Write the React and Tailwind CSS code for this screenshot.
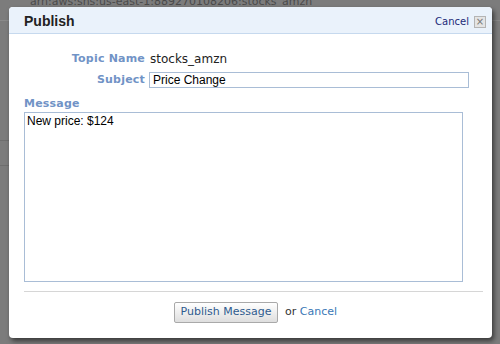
import { useState } from 'react';

function App() {
  const [subject, setSubject] = useState('Price Change');
  const [message, setMessage] = useState('New price: $124');

  return (
    <div className="relative h-[344px] w-[500px] overflow-hidden bg-[#7c7c7c] font-['DejaVu_Sans',sans-serif]">
      {/* page underneath the overlay */}
      <div className="absolute left-[30px] top-[-4px] text-[11px] leading-[12px] text-[#4a4a4a]">
        arn:aws:sns:us-east-1:889270108206:stocks_amzn
      </div>
      <div className="absolute left-0 top-[20px] h-px w-[500px] bg-[#8a8a8a]" />
      <div className="absolute left-0 top-[140px] h-px w-[9px] bg-[#6e6e6e]" />
      <div className="absolute left-0 top-[165px] h-px w-[9px] bg-[#6e6e6e]" />

      <div className="relative ml-[9px] mt-[7px] flex h-[331px] w-[483px] flex-col rounded-[4px] bg-white shadow-[2px_3px_5px_rgba(0,0,0,0.55)]">
        <div className="flex h-[27px] items-center justify-between rounded-t-[4px] border-b border-[#c6d9ee] bg-[#eaf2fb] pl-[15px] pr-[6px] pt-[3px]">
          <h2 className="font-['Liberation_Sans',sans-serif] text-[14px] font-bold text-[#222]">Publish</h2>
          <div className="flex items-center gap-[5px]">
            <a href="#" className="text-[10px] text-[#1c2a78]">Cancel</a>
            <span className="flex h-[12px] w-[12px] items-center justify-center border border-[#b4b4b4] bg-[#e4e4e4] text-[10px] leading-none text-[#777]">
              ×
            </span>
          </div>
        </div>

        <div className="flex flex-col px-[15px]">
          <div className="mt-[16px] grid grid-cols-[121px_1fr] items-center gap-x-[5px]">
            <label className="text-right text-[11px] font-bold tracking-[0.2px] text-[#7193c6]">Topic Name</label>
            <span className="text-[12px] text-[#222]">stocks_amzn</span>
          </div>

          <div className="mt-[4px] grid grid-cols-[121px_320px] items-center gap-x-[4px]">
            <label className="text-right text-[11px] font-bold tracking-[0.2px] text-[#7193c6]">Subject</label>
            <input
              className="h-[16px] border border-[#a9bdd6] px-[3px] font-['Liberation_Sans',sans-serif] text-[12px] text-black outline-none"
              value={subject}
              onChange={(e) => setSubject(e.target.value)}
            />
          </div>

          <label className="mt-[8px] text-[11px] font-bold leading-[14px] tracking-[0.2px] text-[#7193c6]">Message</label>
          <textarea
            className="mt-[1px] h-[170px] w-[439px] resize-none border border-[#a9bdd6] px-[2px] py-[1px] font-['Liberation_Sans',sans-serif] text-[12px] leading-[15px] text-black outline-none"
            value={message}
            onChange={(e) => setMessage(e.target.value)}
          />

          <div className="mt-[9px] h-px w-[459px] bg-[#d6d6d6]" />

          <div className="mt-[10px] flex items-center justify-center gap-[7px] pl-[10px]">
            <button className="h-[21px] w-[104px] rounded-[2px] border border-[#a9a9a9] bg-gradient-to-b from-white to-[#dedede] text-[11px] text-[#2e5b8e]">
              Publish Message
            </button>
            <span className="text-[11px] text-[#333]">
              or <a href="#" className="text-[#3977b6]">Cancel</a>
            </span>
          </div>
        </div>
      </div>
    </div>
  );
}

export default App;
